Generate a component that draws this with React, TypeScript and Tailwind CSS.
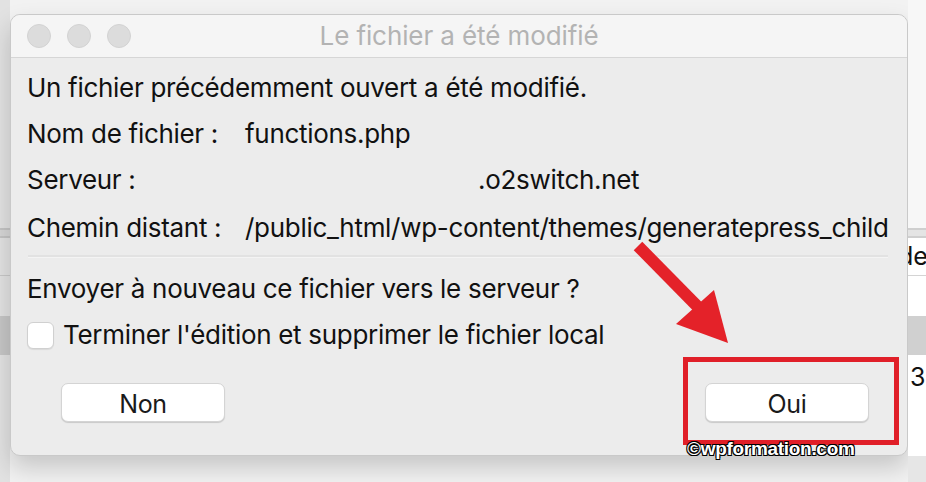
import { useState } from "react";

const font = { fontFamily: "Inter, 'Liberation Sans', sans-serif" };

function TrafficLights() {
    return (
        <div className="flex items-center gap-[16px] pl-[16px]">
            <span className="w-[24px] h-[24px] rounded-full bg-[#dcdcdc] border border-[#d2d2d2]" />
            <span className="w-[24px] h-[24px] rounded-full bg-[#dcdcdc] border border-[#d2d2d2]" />
            <span className="w-[24px] h-[24px] rounded-full bg-[#dcdcdc] border border-[#d2d2d2]" />
        </div>
    );
}

function InfoRow({ label, value, pad }: { label: string; value: string; pad?: boolean }) {
    return (
        <div className="h-[46px] flex items-center">
            <span className="w-[218px] shrink-0">{label}</span>
            <span className={pad ? "pl-[233px]" : ""}>{value}</span>
        </div>
    );
}

export default function App() {
    const [removeLocal, setRemoveLocal] = useState(false);

    return (
        <div className="relative w-[926px] h-[482px] overflow-hidden bg-[#f2f2f2] flex" style={font}>
            {/* fenêtre en arrière-plan, côté gauche */}
            <div className="w-[10px] shrink-0 flex flex-col bg-[#e2e2e2]">
                <div className="h-[228px]" />
                <div className="h-[2px] bg-[#c4c4c4]" />
                <div className="h-[6px] bg-[#d6d6d6]" />
                <div className="h-[2px] bg-[#c4c4c4]" />
                <div className="h-[37px]" />
                <div className="h-[1px] bg-[#c8c8c8]" />
                <div className="h-[40px]" />
                <div className="h-[39px] bg-[#c6c6c6]" />
                <div className="flex-1" />
            </div>

            {/* dialogue */}
            <div className="w-[898px] shrink-0 flex flex-col pt-[14px]">
                <div className="flex flex-col rounded-[10px] border border-[#c9c9c9] bg-[#ececec] shadow-[0_12px_24px_rgba(0,0,0,0.18)] overflow-hidden text-[26px] text-[#111] tracking-[-0.3px] leading-none">
                    <div className="h-[43px] grid grid-cols-[1fr_auto_1fr] items-center bg-[#f5f5f5] border-b border-[#d6d6d6]">
                        <TrafficLights />
                        <span className="text-[#b3b3b3] tracking-[-0.1px]">Le fichier a été modifié</span>
                        <span />
                    </div>

                    <div className="flex flex-col pl-[16px] pt-[7px]">
                        <div className="h-[46px] flex items-center">Un fichier précédemment ouvert a été modifié.</div>
                        <InfoRow label="Nom de fichier :" value="functions.php" />
                        <InfoRow label="Serveur :" value=".o2switch.net" pad />
                        <div className="mt-[2px]">
                            <InfoRow label="Chemin distant :" value="/public_html/wp-content/themes/generatepress_child" />
                        </div>

                        <div className="mt-[4px] mr-[19px] ml-[1px] h-[3px] border-t-2 border-[#e2e2e2] border-b border-b-[#f4f4f4]" />

                        <div className="h-[46px] mt-[8px] flex items-center">Envoyer à nouveau ce fichier vers le serveur ?</div>
                        <label className="h-[46px] flex items-center gap-[9px]">
                            <input
                                type="checkbox"
                                checked={removeLocal}
                                onChange={(e) => setRemoveLocal(e.target.checked)}
                                className="appearance-none w-[27px] h-[27px] rounded-[6px] bg-white border border-[#d0d0d0] shadow-[0_1px_1px_rgba(0,0,0,0.08)]"
                            />
                            <span>Terminer l'édition et supprimer le fichier local</span>
                        </label>
                    </div>

                    <div className="flex justify-between pl-[50px] pr-[38px] pt-[25px] pb-[33px]">
                        <button className="w-[164px] h-[39px] pt-[3px] rounded-[7px] bg-white border border-[#d4d4d4] shadow-[0_1px_1px_rgba(0,0,0,0.15)] text-[25px] text-[#1a1a1a]">
                            Non
                        </button>
                        <button className="w-[164px] h-[39px] pt-[3px] rounded-[7px] bg-white border border-[#d4d4d4] shadow-[0_1px_1px_rgba(0,0,0,0.15)] text-[25px] text-[#1a1a1a]">
                            Oui
                        </button>
                    </div>
                </div>
                <div className="flex-1" />
            </div>

            {/* fenêtre en arrière-plan, côté droit */}
            <div className="w-[18px] shrink-0 flex flex-col bg-[#f7f7f7] text-[25px] leading-none text-[#111] overflow-hidden">
                <div className="h-[228px]" />
                <div className="h-[2px] bg-[#cfcfcf]" />
                <div className="h-[6px] bg-[#e4e4e4]" />
                <div className="h-[2px] bg-[#cfcfcf]" />
                <div className="h-[37px] flex items-center -ml-[10px] bg-white">de</div>
                <div className="h-[1px] bg-[#d4d4d4]" />
                <div className="h-[40px] bg-white" />
                <div className="h-[39px] bg-[#d0d0d0]" />
                <div className="h-[44px] flex items-center pl-[2px] bg-white">30</div>
                <div className="h-[57px] bg-white" />
                <div className="flex-1 bg-[#e6e6e6]" />
            </div>

            {/* annotations */}
            <svg className="absolute left-0 top-0 pointer-events-none" width="926" height="482" viewBox="0 0 926 482">
                <line x1="638" y1="246" x2="700" y2="309" stroke="#e42229" strokeWidth="12" />
                <polygon points="676,324 714,290 728,343" fill="#e42229" />
            </svg>
            <div className="absolute left-[683px] top-[357px] w-[216px] h-[88px] border-[5px] border-[#e01f28]" />
            <div className="absolute left-[687px] top-[435px] text-[19px] font-bold text-white tracking-[-0.3px] [text-shadow:1px_1px_0_#000,-1px_-1px_0_#000,1px_-1px_0_#000,-1px_1px_0_#000,0_1px_0_#000,0_-1px_0_#000]" style={{ fontFamily: "'Liberation Sans', sans-serif" }}>
                ©wpformation.com
            </div>
        </div>
    );
}
